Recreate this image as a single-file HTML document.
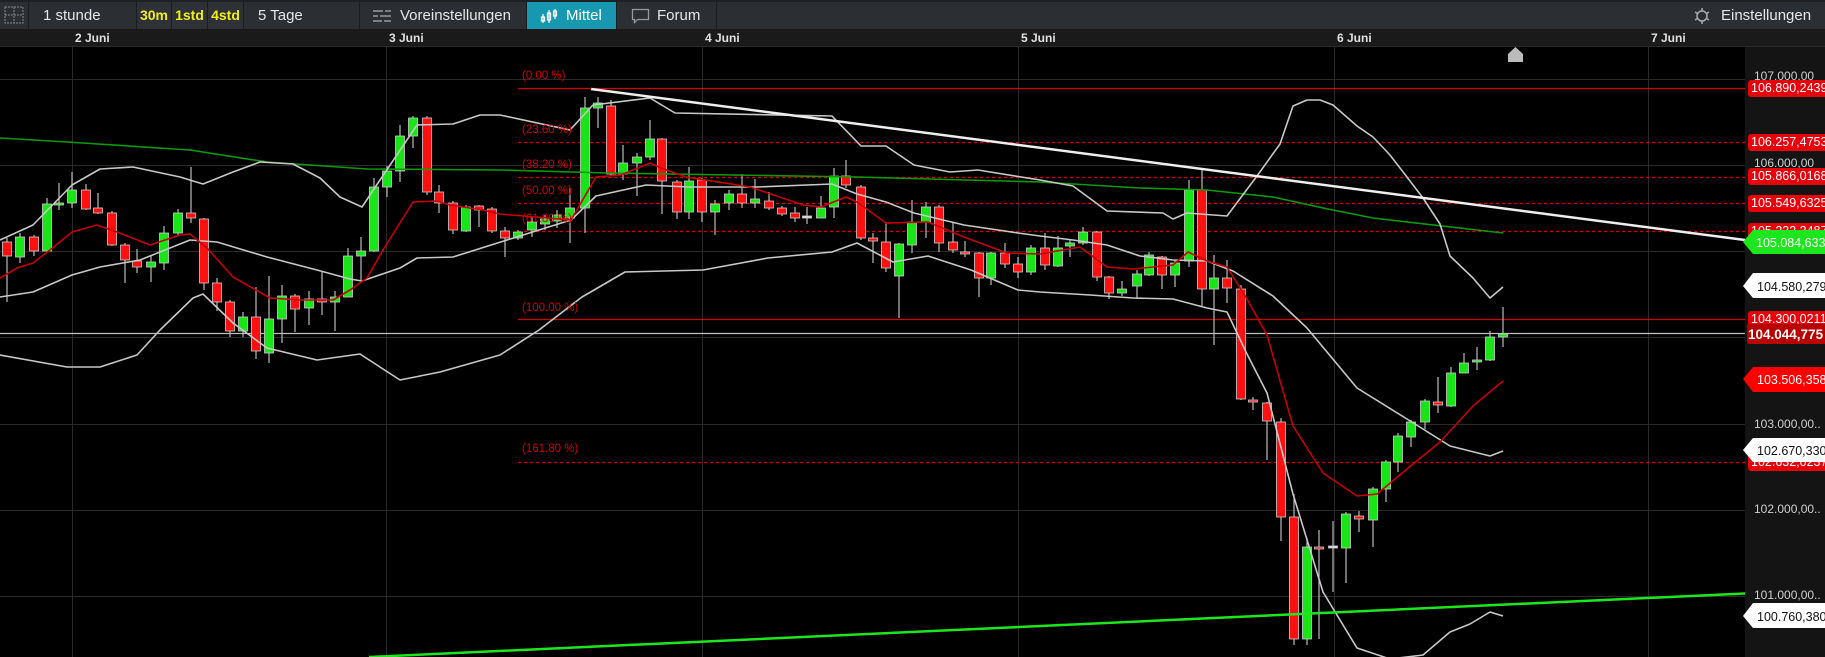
<!DOCTYPE html>
<html><head><meta charset="utf-8"><style>
*{margin:0;padding:0;box-sizing:border-box}
body{width:1825px;height:657px;background:#000;overflow:hidden;font-family:"Liberation Sans",sans-serif;position:relative}
.tb{position:absolute;left:0;top:0;width:1825px;height:29px;background:#2b2e33;border-top:2px solid #1e2023}
.c{position:absolute;top:0;height:27px;border-right:1px solid #1a1c1f;color:#e6e6e6;font-size:15px;line-height:27px}
.y{color:#f2ee1c;font-weight:bold;font-size:14px;text-align:center;background:#2e3136}
.dr{position:absolute;left:0;top:29px;width:1825px;height:18px;background:#1a1a1a;border-bottom:1px solid #2a2a2a}
.d{position:absolute;top:31px;color:#e0e0e0;font-size:12px;font-weight:bold}
.ax{position:absolute;left:1745px;top:47px;width:80px;height:610px;background:#141414}
.al{position:absolute;left:1754px;color:#cfcfcf;font-size:12px;white-space:nowrap}
.rl{position:absolute;left:1748px;width:80px;height:17px;background:#e8000b;border-radius:3px;color:#fff;font-size:12.5px;line-height:17px;padding-left:3px;white-space:nowrap;overflow:hidden}
.fib{position:absolute;left:522px;color:#d40000;font-size:11.5px}
</style></head><body>
<div class="tb">
 <div class="c" style="left:0;width:29px"><svg width="29" height="27"><rect x="5" y="5" width="18" height="16" fill="none" stroke="#888" stroke-dasharray="2 1"/><line x1="14" y1="5" x2="14" y2="21" stroke="#888" stroke-dasharray="2 1"/><line x1="5" y1="13" x2="23" y2="13" stroke="#888" stroke-dasharray="2 1"/></svg></div>
 <div class="c" style="left:29px;width:108px;padding-left:14px">1 stunde</div>
 <div class="c y" style="left:137px;width:35px">30m</div>
 <div class="c y" style="left:172px;width:36px">1std</div>
 <div class="c y" style="left:208px;width:36px">4std</div>
 <div class="c" style="left:244px;width:116px;padding-left:14px">5 Tage</div>
 <div class="c" style="left:360px;width:167px;padding-left:40px">Voreinstellungen<svg style="position:absolute;left:12px;top:6px" width="20" height="16"><g stroke="#999" stroke-width="1.5"><line x1="1" y1="3" x2="19" y2="3"/><line x1="1" y1="8" x2="19" y2="8"/><line x1="1" y1="13" x2="19" y2="13"/></g><g stroke="#2b2e33" stroke-width="2"><line x1="12" y1="0" x2="12" y2="6"/><line x1="7" y1="5" x2="7" y2="11"/><line x1="11" y1="10" x2="11" y2="16"/></g></svg></div>
 <div class="c" style="left:527px;width:90px;background:#1797b0;padding-left:39px;color:#fff">Mittel<svg style="position:absolute;left:13px;top:6px" width="20" height="16"><g stroke="#fff" fill="none" stroke-width="1.2"><line x1="3" y1="6" x2="3" y2="15"/><rect x="1.5" y="9" width="3" height="4"/><line x1="9" y1="2" x2="9" y2="15"/><rect x="7.5" y="5" width="3" height="7"/><line x1="15" y1="1" x2="15" y2="11"/><rect x="13.5" y="3" width="3" height="5"/></g></svg></div>
 <div class="c" style="left:617px;width:100px;padding-left:40px">Forum<svg style="position:absolute;left:14px;top:6px" width="20" height="17"><path d="M1.5 1.5h16v10h-11l-3 3v-3h-2z" fill="none" stroke="#999" stroke-width="1.3"/></svg></div>
 <div style="position:absolute;left:1693px;top:5px"><svg width="18" height="18"><circle cx="9" cy="9" r="5" fill="none" stroke="#aaa" stroke-width="1.5"/><g stroke="#aaa" stroke-width="1.5"><line x1="9" y1="1" x2="9" y2="4"/><line x1="9" y1="14" x2="9" y2="17"/><line x1="2" y1="5" x2="4.5" y2="6.5"/><line x1="16" y1="5" x2="13.5" y2="6.5"/><line x1="2" y1="13" x2="4.5" y2="11.5"/><line x1="16" y1="13" x2="13.5" y2="11.5"/></g></svg></div>
 <div style="position:absolute;left:1721px;top:0;line-height:27px;color:#e6e6e6;font-size:15px">Einstellungen</div>
</div>
<div class="dr"></div>
<div class="d" style="left:75px">2 Juni</div>
<div class="d" style="left:389px">3 Juni</div>
<div class="d" style="left:705px">4 Juni</div>
<div class="d" style="left:1021px">5 Juni</div>
<div class="d" style="left:1337px">6 Juni</div>
<div class="d" style="left:1651px">7 Juni</div>
<div class="ax"></div>
<svg id="ch" style="position:absolute;left:0;top:0" width="1825" height="657">
 <g stroke="#2a2a2a" stroke-width="1">
  <line x1="72.5" y1="47" x2="72.5" y2="657"/><line x1="386.5" y1="47" x2="386.5" y2="657"/><line x1="702.5" y1="47" x2="702.5" y2="657"/><line x1="1018.5" y1="47" x2="1018.5" y2="657"/><line x1="1334.5" y1="47" x2="1334.5" y2="657"/><line x1="1648.5" y1="47" x2="1648.5" y2="657"/>
  <line x1="0" y1="79.5" x2="1745" y2="79.5"/><line x1="0" y1="165.5" x2="1745" y2="165.5"/><line x1="0" y1="251.5" x2="1745" y2="251.5"/><line x1="0" y1="337.5" x2="1745" y2="337.5"/><line x1="0" y1="424.5" x2="1745" y2="424.5"/><line x1="0" y1="510.5" x2="1745" y2="510.5"/><line x1="0" y1="596.5" x2="1745" y2="596.5"/>
 </g>
 <path d="M1508 62v-8l7.5-7 7.5 7v8z" fill="#bbb"/>
 <g stroke="#d40000" stroke-width="1.3">
  <line x1="518" y1="88.5" x2="1745" y2="88.5"/>
  <line x1="518" y1="319.5" x2="1745" y2="319.5"/>
 </g>
 <g stroke="#d40000" stroke-width="1.3" stroke-dasharray="3 3">
  <line x1="518" y1="142.5" x2="1745" y2="142.5"/><line x1="518" y1="177.5" x2="1745" y2="177.5"/><line x1="518" y1="203.5" x2="1745" y2="203.5"/><line x1="518" y1="231.5" x2="1745" y2="231.5"/><line x1="518" y1="462.5" x2="1745" y2="462.5"/>
 </g>
 <line x1="0" y1="333.5" x2="1745" y2="333.5" stroke="#bdbdbd" stroke-width="1.3"/>
 <g id="cs"></g>
 <g fill="none" stroke-linejoin="round">
  <polyline stroke="#0b9a0b" stroke-width="1.6" points="0,138 67,142 190,150 267,162 367,169 500,170 607,173 857,177 1040,182 1140,188 1207,190 1273,197 1323,208 1373,218 1503,233"/>
  <polyline stroke="#c8c8c8" stroke-width="1.6" points="0,240 33,225 72,185 100,169 133,167 180,177 203,184 233,172 260,162 293,164 320,178 340,197 362,207 380,180 417,125 453,124 480,115 500,115 570,130 593,105 650,98 675,113 832,116 861,146 886,146 914,165 950,172 978,170 1040,180 1073,186 1107,211 1163,213 1173,219 1187,213 1227,216 1257,176 1280,144 1293,106 1307,100 1320,100 1333,105 1357,126 1373,137 1390,155 1423,198 1440,224 1450,256 1473,278 1490,298 1503,287"/>
  <polyline stroke="#c8c8c8" stroke-width="1.6" points="0,297 33,292 72,275 100,267 140,260 190,240 217,242 267,257 317,270 350,279 362,281 400,268 417,258 453,257 507,240 571,220 596,196 646,185 689,187 757,187 832,184 857,194 886,202 914,213 964,225 1018,233 1040,236 1073,240 1107,245 1140,256 1173,260 1207,261 1233,271 1273,296 1307,328 1357,388 1407,419 1450,446 1490,456 1503,451"/>
  <polyline stroke="#c8c8c8" stroke-width="1.6" points="0,355 67,367 100,367 137,355 160,330 193,298 203,294 233,323 267,348 317,360 360,354 400,380 440,372 500,355 539,330 582,297 625,272 703,270 768,258 832,252 857,243 893,262 928,256 971,270 1018,290 1040,292 1090,295 1133,298 1173,299 1207,308 1227,312 1247,354 1267,393 1293,494 1323,592 1357,648 1390,659 1423,655 1450,632 1470,624 1490,612 1503,616"/>
  <polyline stroke="#c80000" stroke-width="1.6" points="0,278 17,268 33,263 50,250 72,232 97,225 117,232 150,245 180,235 190,234 207,248 233,277 270,298 300,300 333,300 350,290 367,278 383,250 413,202 437,201 450,205 483,210 500,214 571,220 596,177 621,175 650,163 661,168 686,177 750,187 803,205 821,207 846,197 857,202 886,223 928,222 964,237 1007,253 1040,254 1080,247 1107,267 1133,269 1173,265 1188,252 1207,261 1227,267 1247,299 1267,335 1293,426 1323,473 1357,496 1377,494 1407,469 1440,442 1473,406 1503,381"/>
 </g>
 <line x1="591" y1="89" x2="1745" y2="240" stroke="#eee" stroke-width="2.5"/>
 <line x1="369" y1="657" x2="1745" y2="593.5" stroke="#1ee61e" stroke-width="2.5"/>
</svg>
<div class="fib" style="top:70px">(0.00 %)</div>
<div class="fib" style="top:124px">(23.60 %)</div>
<div class="fib" style="top:159px">(38.20 %)</div>
<div class="fib" style="top:185px">(50.00 %)</div>
<div class="fib" style="top:213px">(61.80 %)</div>
<div class="fib" style="top:302px">(100.00 %)</div>
<div class="fib" style="top:443px">(161.80 %)</div>

<div class="al" style="top:69px">107.000,00</div>
<div class="al" style="top:156px">106.000,00</div>
<div class="al" style="top:417px">103.000,00..</div>
<div class="al" style="top:502px">102.000,00..</div>
<div class="al" style="top:588px">101.000,00..</div>
<div class="rl" style="top:80px">106.890,2439</div>
<div class="rl" style="top:134px">106.257,4753</div>
<div class="rl" style="top:168px">105.866,0168</div>
<div class="rl" style="top:195px">105.549,6325</div>
<div class="rl" style="top:223px">105.232,3487</div>
<div class="rl" style="top:311px">104.300,0211</div>
<div class="rl" style="top:454px">102.632,0237</div>
<svg style="position:absolute;left:1743px;top:0" width="82" height="657">
 <path d="M0 242 L10 230 H82 V254 H10 Z" fill="#1ee61e"/>
 <path d="M0 286 L10 273 H82 V298 H10 Z" fill="#fff"/>
 <path d="M0 379 L10 367 H82 V392 H10 Z" fill="#f00"/>
 <path d="M0 450 L10 438 H82 V462 H10 Z" fill="#fff"/>
 <path d="M0 616 L10 603 H82 V628 H10 Z" fill="#fff"/>
 <rect x="4" y="324" width="80" height="20" rx="2" fill="#b80000"/>
 <g font-family="Liberation Sans,sans-serif" font-size="12.5">
  <text x="13" y="247" fill="#fff">105.084,633</text>
  <text x="14" y="291" fill="#111">104.580,279</text>
  <text x="14" y="384" fill="#fff">103.506,358</text>
  <text x="14" y="455" fill="#111">102.670,330</text>
  <text x="14" y="621" fill="#111">100.760,380</text>
  <text x="5" y="339" fill="#fff" font-weight="bold" font-size="13.5">104.044,775</text>
 </g>
</svg>
<script>
var D=[[7,242,256,238,302,'r'],[20,237,257,233,263,'g'],[34,237,251,235,256,'r'],[47,204,251,198,252,'g'],[59,203,205,183,210,'g'],[72,190,203,172,208,'g'],[86,190,209,184,210,'r'],[98,208,213,193,214,'r'],[112,213,245,211,246,'r'],[125,245,260,243,283,'r'],[137,261,267,249,273,'r'],[151,262,267,255,282,'g'],[164,233,263,226,270,'g'],[178,213,233,209,235,'g'],[191,213,218,167,223,'r'],[204,219,283,218,290,'r'],[217,283,302,278,311,'r'],[230,302,331,300,337,'r'],[243,317,331,312,337,'g'],[256,317,351,287,359,'r'],[269,319,353,276,363,'g'],[282,296,319,285,343,'g'],[295,296,309,294,332,'r'],[309,299,308,291,325,'g'],[322,299,302,272,315,'r'],[335,297,302,291,331,'g'],[348,256,297,248,297,'g'],[361,251,256,237,280,'g'],[374,187,251,178,252,'g'],[387,171,187,166,197,'g'],[400,136,171,125,182,'g'],[413,118,136,116,148,'g'],[427,118,192,116,195,'r'],[439,192,203,185,213,'r'],[453,203,230,201,234,'r'],[466,207,231,205,232,'g'],[479,206,210,205,227,'r'],[492,209,231,207,233,'r'],[505,231,238,227,257,'r'],[518,232,238,230,240,'g'],[532,222,230,217,237,'g'],[545,219,224,215,230,'g'],[557,215,221,210,228,'g'],[570,208,218,188,243,'g'],[585,108,208,97,233,'g'],[598,103,108,97,128,'g'],[611,106,174,100,176,'r'],[623,163,174,145,180,'g'],[637,157,163,153,196,'g'],[650,139,157,120,160,'g'],[662,139,181,138,214,'r'],[677,182,212,180,219,'r'],[689,181,212,167,219,'g'],[702,180,212,178,222,'r'],[715,204,212,200,235,'g'],[729,194,203,190,210,'g'],[742,194,203,174,208,'r'],[755,199,203,179,208,'g'],[769,201,208,192,210,'r'],[782,208,214,206,216,'r'],[795,213,218,207,222,'r'],[807,216,218,207,224,'w'],[821,208,218,196,218,'g'],[834,176,207,168,218,'g'],[846,176,185,160,188,'r'],[861,187,238,185,240,'r'],[873,238,241,233,263,'r'],[886,242,268,222,272,'r'],[899,244,276,243,318,'g'],[912,222,245,200,253,'g'],[926,207,222,202,238,'g'],[939,207,243,205,252,'r'],[953,242,250,222,253,'r'],[965,252,254,241,257,'r'],[979,253,278,252,297,'r'],[991,253,278,252,285,'g'],[1005,253,264,243,268,'r'],[1018,264,272,257,278,'r'],[1031,248,272,245,275,'g'],[1045,248,265,233,270,'r'],[1058,248,266,236,267,'g'],[1070,243,246,240,257,'g'],[1083,232,243,227,245,'g'],[1097,232,277,231,281,'r'],[1109,277,293,276,299,'r'],[1122,289,293,281,296,'g'],[1137,274,286,270,299,'g'],[1149,255,275,252,276,'g'],[1162,257,275,256,289,'r'],[1175,263,275,260,287,'g'],[1189,190,261,180,267,'g'],[1202,190,289,168,307,'r'],[1214,278,289,255,345,'g'],[1227,278,288,260,303,'r'],[1241,289,399,285,400,'r'],[1253,400,402,397,410,'r'],[1267,403,421,402,460,'r'],[1281,422,517,418,541,'r'],[1294,517,639,494,645,'r'],[1307,547,639,538,645,'g'],[1319,547,549,530,639,'r'],[1333,546,548,521,592,'w'],[1346,514,548,512,583,'g'],[1359,516,519,511,532,'r'],[1373,489,520,487,547,'g'],[1386,462,489,460,502,'g'],[1398,436,462,433,472,'g'],[1411,422,437,420,447,'g'],[1425,401,422,399,429,'g'],[1438,402,405,377,413,'r'],[1451,373,406,367,407,'g'],[1464,363,373,353,373,'g'],[1477,360,362,347,370,'g'],[1490,337,360,331,361,'g'],[1503,334,337,307,347,'g']];
var s='';D.forEach(function(c){var f=c[5]=='r'?'#ff1010':(c[5]=='g'?'#18e418':'#ddd');
s+='<line x1="'+c[0]+'" y1="'+c[3]+'" x2="'+c[0]+'" y2="'+c[4]+'" stroke="#bbb" stroke-width="1.2"/>';
var h=Math.max(2,c[2]-c[1]);s+='<rect x="'+(c[0]-4.5)+'" y="'+c[1]+'" width="9" height="'+h+'" fill="'+f+'" stroke="#ccc" stroke-width="0.8"/>';});
document.getElementById('cs').innerHTML=s;
</script>
</body></html>
